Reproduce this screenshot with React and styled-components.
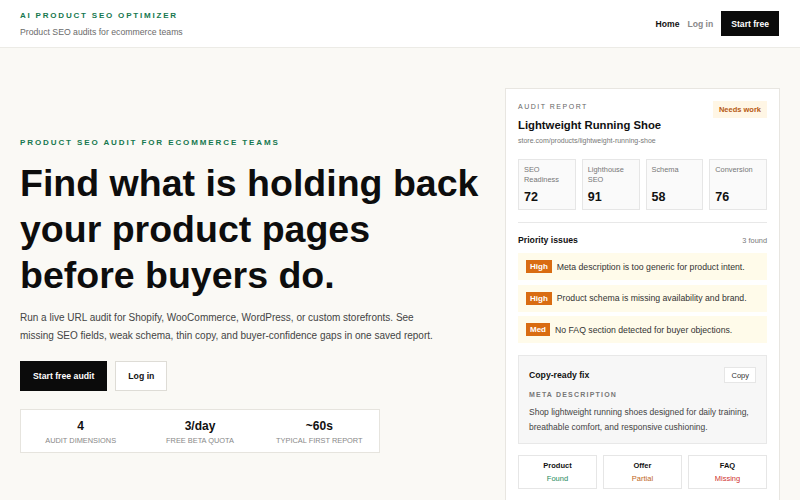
import React from "react";
import styled, { createGlobalStyle } from "styled-components";

const GlobalStyle = createGlobalStyle`
  * { box-sizing: border-box; }
  body {
    margin: 0;
    font-family: "Liberation Sans", Arial, sans-serif;
    background: #faf9f5;
    color: #111;
  }
`;

const metrics = [
  { label: "SEO Readiness", value: 72 },
  { label: "Lighthouse SEO", value: 91 },
  { label: "Schema", value: 58 },
  { label: "Conversion", value: 76 },
];

const issues = [
  { level: "High", text: "Meta description is too generic for product intent." },
  { level: "High", text: "Product schema is missing availability and brand." },
  { level: "Med", text: "No FAQ section detected for buyer objections." },
];

const checks = [
  { name: "Product", status: "Found", tone: "good" },
  { name: "Offer", status: "Partial", tone: "warn" },
  { name: "FAQ", status: "Missing", tone: "bad" },
];

const stats = [
  { value: "4", label: "Audit dimensions" },
  { value: "3/day", label: "Free beta quota" },
  { value: "~60s", label: "Typical first report" },
];

function App() {
  return (
    <>
      <GlobalStyle />
      <Header>
        <Brand>
          <BrandName>AI Product SEO Optimizer</BrandName>
          <BrandTag>Product SEO audits for ecommerce teams</BrandTag>
        </Brand>
        <Nav>
          <NavLink $active>Home</NavLink>
          <NavLink>Log in</NavLink>
          <NavButton>Start free</NavButton>
        </Nav>
      </Header>

      <Main>
        <Hero>
          <Eyebrow>Product SEO audit for ecommerce teams</Eyebrow>
          <Title>Find what is holding back your product pages before buyers do.</Title>
          <Lead>
            Run a live URL audit for Shopify, WooCommerce, WordPress, or custom storefronts. See
            missing SEO fields, weak schema, thin copy, and buyer-confidence gaps in one saved report.
          </Lead>
          <Actions>
            <PrimaryButton>Start free audit</PrimaryButton>
            <GhostButton>Log in</GhostButton>
          </Actions>
          <Stats>
            {stats.map((s) => (
              <Stat key={s.label}>
                <StatValue>{s.value}</StatValue>
                <StatLabel>{s.label}</StatLabel>
              </Stat>
            ))}
          </Stats>
        </Hero>

        <Report>
          <ReportTop>
            <div>
              <Kicker>Audit report</Kicker>
              <ReportTitle>Lightweight Running Shoe</ReportTitle>
              <ReportUrl>store.com/products/lightweight-running-shoe</ReportUrl>
            </div>
            <StatusPill>Needs work</StatusPill>
          </ReportTop>

          <MetricGrid>
            {metrics.map((m) => (
              <Metric key={m.label}>
                <MetricLabel>{m.label}</MetricLabel>
                <MetricValue>{m.value}</MetricValue>
              </Metric>
            ))}
          </MetricGrid>

          <Divider />

          <SectionHead>
            <SectionTitle>Priority issues</SectionTitle>
            <SectionCount>3 found</SectionCount>
          </SectionHead>
          <IssueList>
            {issues.map((i) => (
              <Issue key={i.text}>
                <Level>{i.level}</Level>
                {i.text}
              </Issue>
            ))}
          </IssueList>

          <FixBox>
            <FixHead>
              <SectionTitle>Copy-ready fix</SectionTitle>
              <CopyButton>Copy</CopyButton>
            </FixHead>
            <FixLabel>Meta description</FixLabel>
            <FixText>
              Shop lightweight running shoes designed for daily training, breathable comfort, and
              responsive cushioning.
            </FixText>
          </FixBox>

          <CheckGrid>
            {checks.map((c) => (
              <Check key={c.name}>
                <CheckName>{c.name}</CheckName>
                <CheckStatus $tone={c.tone}>{c.status}</CheckStatus>
              </Check>
            ))}
          </CheckGrid>
        </Report>
      </Main>
    </>
  );
}

const Header = styled.header`
  height: 48px;
  background: #fff;
  border-bottom: 1px solid #ecebe6;
  display: flex;
  align-items: center;
  justify-content: space-between;
  padding: 0 21px 0 20px;
`;

const Brand = styled.div`
  display: flex;
  flex-direction: column;
  gap: 6px;
`;

const BrandName = styled.div`
  color: #16784f;
  font-size: 8px;
  line-height: 10px;
  font-weight: 700;
  letter-spacing: 1.8px;
  text-transform: uppercase;
`;

const BrandTag = styled.div`
  color: #6b6b6b;
  font-size: 8.7px;
  line-height: 10px;
`;

const Nav = styled.nav`
  display: flex;
  align-items: center;
  gap: 8px;
`;

const NavLink = styled.a`
  font-size: 8.6px;
  font-weight: 700;
  color: ${(p) => (p.$active ? "#111" : "#888")};
`;

const NavButton = styled.button`
  height: 25px;
  padding: 0 10px;
  border: 0;
  background: #0b0b0b;
  color: #fff;
  font-family: inherit;
  font-size: 8.6px;
  font-weight: 700;
`;

const Main = styled.main`
  display: grid;
  grid-template-columns: 1fr 275px;
  gap: 26px;
  padding: 40px 20px 0 20px;
  align-items: start;
`;

const Hero = styled.section`
  padding-top: 50px;
`;

const Eyebrow = styled.div`
  color: #16784f;
  font-size: 8px;
  line-height: 10px;
  font-weight: 700;
  letter-spacing: 1.9px;
  text-transform: uppercase;
`;

const Title = styled.h1`
  margin: 12px 0 0;
  font-size: 37.5px;
  line-height: 46px;
  font-weight: 700;
  color: #0d0d0d;
  max-width: 470px;
`;

const Lead = styled.p`
  margin: 11px 0 0;
  font-size: 10px;
  line-height: 18px;
  color: #444;
  max-width: 425px;
`;

const Actions = styled.div`
  display: flex;
  gap: 8px;
  margin-top: 16px;
`;

const PrimaryButton = styled.button`
  height: 30px;
  padding: 0 12px;
  border: 1px solid #0b0b0b;
  background: #0b0b0b;
  color: #fff;
  font-family: inherit;
  font-size: 8.7px;
  font-weight: 700;
`;

const GhostButton = styled(PrimaryButton)`
  background: #fff;
  color: #111;
  border-color: #dedcd6;
  padding: 0 12px;
`;

const Stats = styled.div`
  display: grid;
  grid-template-columns: repeat(3, 1fr);
  width: 360px;
  height: 44px;
  margin-top: 18px;
  padding-top: 9px;
  background: #fff;
  border: 1px solid #e6e4de;
`;

const Stat = styled.div`
  text-align: center;
`;

const StatValue = styled.div`
  font-size: 12px;
  line-height: 14px;
  font-weight: 700;
  color: #111;
`;

const StatLabel = styled.div`
  margin-top: 3px;
  font-size: 7.4px;
  line-height: 9px;
  color: #888;
  text-transform: uppercase;
`;

const Report = styled.section`
  background: #fff;
  border: 1px solid #e8e6e1;
  padding: 13px 12px 20px;
`;

const ReportTop = styled.div`
  display: flex;
  justify-content: space-between;
  align-items: flex-start;
`;

const Kicker = styled.div`
  font-size: 7px;
  line-height: 9px;
  color: #666;
  letter-spacing: 1.5px;
  text-transform: uppercase;
`;

const ReportTitle = styled.div`
  margin-top: 7px;
  font-size: 11.3px;
  line-height: 14px;
  font-weight: 700;
  color: #111;
`;

const ReportUrl = styled.div`
  margin-top: 4px;
  font-size: 7px;
  line-height: 9px;
  color: #777;
`;

const StatusPill = styled.span`
  margin-top: -1px;
  padding: 4px 6px;
  background: #fff6e5;
  color: #b65a12;
  font-size: 7.5px;
  font-weight: 700;
`;

const MetricGrid = styled.div`
  display: grid;
  grid-template-columns: repeat(4, 1fr);
  gap: 6px;
  margin-top: 14px;
`;

const Metric = styled.div`
  height: 51px;
  padding: 5px 5px 5px;
  background: #fafafa;
  border: 1px solid #e6e6e6;
  display: flex;
  flex-direction: column;
  justify-content: space-between;
`;

const MetricLabel = styled.div`
  font-size: 7.4px;
  line-height: 10px;
  color: #777;
`;

const MetricValue = styled.div`
  font-size: 12.5px;
  font-weight: 700;
  color: #111;
`;

const Divider = styled.hr`
  margin: 12px 0 0;
  border: 0;
  border-top: 1px solid #e8e8e8;
`;

const SectionHead = styled.div`
  display: flex;
  justify-content: space-between;
  align-items: center;
  margin-top: 12px;
`;

const SectionTitle = styled.div`
  font-size: 8.7px;
  font-weight: 700;
  color: #111;
`;

const SectionCount = styled.div`
  font-size: 7.4px;
  color: #777;
`;

const IssueList = styled.div`
  display: flex;
  flex-direction: column;
  gap: 4.5px;
  margin-top: 8px;
`;

const Issue = styled.div`
  display: flex;
  align-items: center;
  gap: 5px;
  height: 27px;
  padding: 0 8px;
  background: #fffbea;
  font-size: 8.7px;
  color: #333;
`;

const Level = styled.span`
  padding: 2px 4px;
  background: #d96c12;
  color: #fff;
  font-size: 8px;
  font-weight: 700;
`;

const FixBox = styled.div`
  margin-top: 12px;
  height: 89px;
  padding: 11px 10px 0;
  background: #f7f7f7;
  border: 1px solid #e8e8e8;
`;

const FixHead = styled.div`
  display: flex;
  justify-content: space-between;
  align-items: center;
`;

const CopyButton = styled.button`
  height: 16px;
  padding: 0 6px;
  background: #fff;
  border: 1px solid #e6e6e6;
  font-family: inherit;
  font-size: 7.5px;
  color: #333;
`;

const FixLabel = styled.div`
  margin-top: 7px;
  font-size: 7px;
  line-height: 9px;
  font-weight: 700;
  letter-spacing: 1.2px;
  color: #777;
  text-transform: uppercase;
`;

const FixText = styled.p`
  margin: 6px 0 0;
  font-size: 8.5px;
  line-height: 15px;
  color: #444;
`;

const CheckGrid = styled.div`
  display: grid;
  grid-template-columns: repeat(3, 1fr);
  gap: 6px;
  margin-top: 11px;
`;

const Check = styled.div`
  height: 34px;
  border: 1px solid #e6e6e6;
  text-align: center;
  padding-top: 5px;
`;

const CheckName = styled.div`
  font-size: 7.5px;
  line-height: 9px;
  font-weight: 700;
  color: #111;
`;

const toneColor = { good: "#1f8a5b", warn: "#c0661d", bad: "#d0332f" };

const CheckStatus = styled.div`
  margin-top: 4px;
  font-size: 7.5px;
  line-height: 9px;
  color: ${(p) => toneColor[p.$tone]};
`;

export default App;
